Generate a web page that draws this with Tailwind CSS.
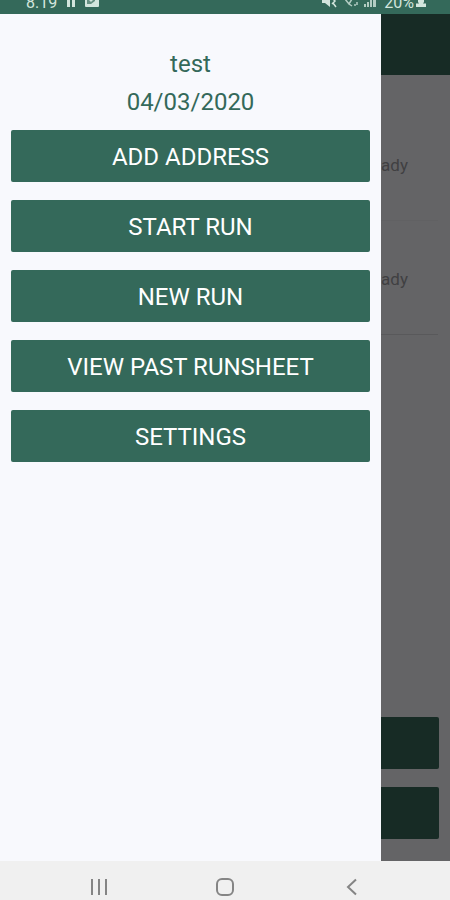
<!DOCTYPE html>
<html lang="en">
<head>
<meta charset="utf-8">
<meta name="viewport" content="width=device-width, initial-scale=1">
<title>Runsheet</title>
<script src="https://cdn.jsdelivr.net/npm/@tailwindcss/browser@4"></script>
</head>
<body class="flex h-screen flex-col overflow-hidden bg-[#f8f9fd] font-[Roboto,sans-serif]">
  <!-- Status bar -->
  <header class="flex h-[14px] shrink-0 items-end justify-between overflow-hidden bg-[#34695a] pr-6 pb-[3px] pl-[26px] text-base leading-4 text-[#d3e5dd]">
    <div class="flex items-end gap-[9px]">
      <span>8.19</span>
      <svg class="mb-1 h-3 w-[10px]" viewBox="0 0 10 12" fill="currentColor" aria-hidden="true"><path d="M1 0h3v12H1zM6 0h3v12H6z"/></svg>
      <svg class="mb-1 h-3 w-[14px]" viewBox="0 0 14 12" aria-hidden="true"><rect width="14" height="12" rx="1" fill="currentColor"/><path d="M2 9V5h2l2 2 4-4v3l-4 3z" fill="#34695a" opacity=".7"/></svg>
    </div>
    <div class="flex items-end gap-1">
      <svg class="mb-[3px] h-[14px] w-[15px]" viewBox="0 0 15 14" fill="none" stroke="currentColor" stroke-width="1.5" aria-hidden="true"><path d="M0 4h3l5-4v13L3 9H0z" fill="currentColor" stroke="none"/><path d="M10 4l3 3-3 3M11 9l3 4"/></svg>
      <svg class="mb-1 ml-1 h-3 w-[15px]" viewBox="0 0 15 12" fill="none" stroke="currentColor" stroke-width="1.5" aria-hidden="true"><path d="M0 4c2-2 5-2 7 0L4 9zM4 9l3 2M9 10h2M12 7v3" opacity=".8"/></svg>
      <svg class="mb-1 h-3 w-3" viewBox="0 0 12 12" fill="currentColor" opacity=".8" aria-hidden="true"><path d="M0 9h2v3H0zM3 7h2v5H3zM6 4h2v8H6zM9 0h3v12H9z"/></svg>
      <div class="ml-1 flex items-end gap-[2px]">
        <span>20%</span>
        <svg class="mb-[3px] h-[14px] w-[10px]" viewBox="0 0 10 14" fill="currentColor" aria-hidden="true"><path d="M2 3h6v5L7 9.500h3V13H0V9.500h3L2 8z"/></svg>
      </div>
    </div>
  </header>

  <div class="relative min-h-0 flex-1">
    <!-- Run list, dimmed behind the drawer -->
    <main class="flex h-full flex-col bg-[#646466]" aria-hidden="true">
      <div class="h-[61px] bg-[#172b25]"></div>
      <ul class="mt-8 mr-3 flex-1 text-[17px] text-[#404042]">
        <li class="flex h-[114px] items-center justify-end border-b border-[#616163] pt-[5px] pr-[30px]">Ready</li>
        <li class="flex h-[114px] items-center justify-end border-b border-[#59595b] pt-[5px] pr-[30px]">Ready</li>
      </ul>
      <div class="flex flex-col gap-[18px] px-[11px] pb-[22px]">
        <div class="h-[52px] rounded-xs bg-[#172b25]"></div>
        <div class="h-[52px] rounded-xs bg-[#172b25]"></div>
      </div>
    </main>

    <!-- Navigation drawer -->
    <aside class="absolute inset-y-0 left-0 w-[381px] bg-[#f8f9fd] px-[11px] pt-8 text-center text-2xl text-[#34695a]">
      <p class="h-[38px] leading-9">test</p>
      <p class="h-[46px] leading-9">04/03/2020</p>
      <nav class="flex flex-col gap-[18px] text-white">
        <button type="button" class="h-[52px] rounded-xs bg-[#34695a] pt-[2px]">ADD ADDRESS</button>
        <button type="button" class="h-[52px] rounded-xs bg-[#34695a] pt-[2px]">START RUN</button>
        <button type="button" class="h-[52px] rounded-xs bg-[#34695a] pt-[2px]">NEW RUN</button>
        <button type="button" class="h-[52px] rounded-xs bg-[#34695a] pt-[2px]">VIEW PAST RUNSHEET</button>
        <button type="button" class="h-[52px] rounded-xs bg-[#34695a] pt-[2px]">SETTINGS</button>
      </nav>
    </aside>
  </div>

  <!-- System navigation -->
  <footer class="flex h-[39px] shrink-0 justify-center gap-[102px] bg-[#f0f0f0] pt-[13px] text-[#858585]">
    <button type="button" aria-label="Recent apps" class="h-6 w-6"><svg class="h-6 w-6" viewBox="0 0 24 24" fill="none" stroke="currentColor" stroke-width="2" aria-hidden="true"><path d="M5 5v16M12 5v16M19 5v16"/></svg></button>
    <button type="button" aria-label="Home" class="h-6 w-6"><svg class="h-6 w-6" viewBox="0 0 24 24" fill="none" stroke="currentColor" stroke-width="2" aria-hidden="true"><rect x="4" y="5" width="16" height="16" rx="5"/></svg></button>
    <button type="button" aria-label="Back" class="h-6 w-6"><svg class="h-6 w-6" viewBox="0 0 24 24" fill="none" stroke="currentColor" stroke-width="2" aria-hidden="true"><path d="M17 5.500l-8 7.500 8 7.500"/></svg></button>
  </footer>
</body>
</html>
